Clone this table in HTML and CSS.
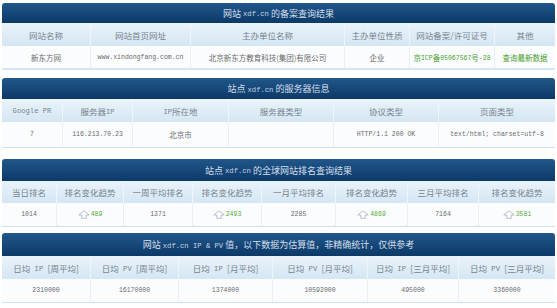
FILE: index.html
```html
<!DOCTYPE html>
<html lang="zh">
<head>
<meta charset="utf-8">
<title>xdf.cn 查询结果</title>
<link rel="stylesheet" href="styles.css">
</head>
<body>
<div class="page">

  <section class="panel p1">
    <div class="title">网站 <span class="m">xdf.cn</span> 的备案查询结果</div>
    <div class="row head">
      <div>网站名称</div>
      <div>网站首页网址</div>
      <div>主办单位名称</div>
      <div>主办单位性质</div>
      <div>网站备案/许可证号</div>
      <div>其他</div>
    </div>
    <div class="row data">
      <div>新东方网</div>
      <div class="m">www.xindongfang.com.cn</div>
      <div>北京新东方教育科技(集团)有限公司</div>
      <div>企业</div>
      <div class="green">京<span class="m">ICP</span>备<span class="m">05067567</span>号<span class="m">-28</span></div>
      <div class="green">查询最新数据</div>
    </div>
  </section>

  <section class="panel p2">
    <div class="title">站点 <span class="m">xdf.cn</span> 的服务器信息</div>
    <div class="row head">
      <div class="m">Google PR</div>
      <div>服务器<span class="m">IP</span></div>
      <div><span class="m">IP</span>所在地</div>
      <div>服务器类型</div>
      <div>协议类型</div>
      <div>页面类型</div>
    </div>
    <div class="row data">
      <div class="m">7</div>
      <div class="m">116.213.70.23</div>
      <div>北京市</div>
      <div></div>
      <div class="m">HTTP/1.1 200 OK</div>
      <div class="m">text/html; charset=utf-8</div>
    </div>
  </section>

  <section class="panel p3">
    <div class="title">站点 <span class="m">xdf.cn</span> 的全球网站排名查询结果</div>
    <div class="row head">
      <div>当日排名</div>
      <div>排名变化趋势</div>
      <div>一周平均排名</div>
      <div>排名变化趋势</div>
      <div>一月平均排名</div>
      <div>排名变化趋势</div>
      <div>三月平均排名</div>
      <div>排名变化趋势</div>
    </div>
    <div class="row data">
      <div class="m">1014</div>
      <div class="trend"><svg class="up" viewBox="0 0 12 9" width="12" height="9"><polygon points="6,0.8 11.2,5 8.2,5 8.2,8.3 3.8,8.3 3.8,5 0.8,5"/></svg><span class="num">489</span></div>
      <div class="m">1371</div>
      <div class="trend"><svg class="up" viewBox="0 0 12 9" width="12" height="9"><polygon points="6,0.8 11.2,5 8.2,5 8.2,8.3 3.8,8.3 3.8,5 0.8,5"/></svg><span class="num">2493</span></div>
      <div class="m">2285</div>
      <div class="trend"><svg class="up" viewBox="0 0 12 9" width="12" height="9"><polygon points="6,0.8 11.2,5 8.2,5 8.2,8.3 3.8,8.3 3.8,5 0.8,5"/></svg><span class="num">4869</span></div>
      <div class="m">7164</div>
      <div class="trend"><svg class="up" viewBox="0 0 12 9" width="12" height="9"><polygon points="6,0.8 11.2,5 8.2,5 8.2,8.3 3.8,8.3 3.8,5 0.8,5"/></svg><span class="num">3581</span></div>
    </div>
  </section>

  <section class="panel p4">
    <div class="title">网站 <span class="m">xdf.cn IP &amp; PV</span> 值，以下数据为估算值，非精确统计，仅供参考</div>
    <div class="row head">
      <div>日均<span class="m"> IP </span>[周平均]</div>
      <div>日均<span class="m"> PV </span>[周平均]</div>
      <div>日均<span class="m"> IP </span>[月平均]</div>
      <div>日均<span class="m"> PV </span>[月平均]</div>
      <div>日均<span class="m"> IP </span>[三月平均]</div>
      <div>日均<span class="m"> PV </span>[三月平均]</div>
    </div>
    <div class="row data">
      <div class="m">2310000</div>
      <div class="m">16170000</div>
      <div class="m">1374000</div>
      <div class="m">10592000</div>
      <div class="m">495000</div>
      <div class="m">3360000</div>
    </div>
  </section>

</div>
</body>
</html>
```

FILE: styles.css
```css
html, body {
  margin: 0;
  padding: 0;
  background: #ffffff;
}

body {
  font-family: "Noto Sans CJK SC", "Noto Sans", sans-serif;
}

.page {
  width: 553px;
  margin: 3px 0 0 2px;
}

.panel {
  margin-bottom: 7px;
}

.title {
  height: 20px;
  display: flex;
  align-items: center;
  justify-content: center;
  background: linear-gradient(#21578b, #0c3967);
  color: #d3dfeb;
  font-size: 9px;
  border-radius: 3px 3px 0 0;
  white-space: pre;
}

.title .m {
  font-size: 7.2px;
  color: #c6d4e2;
}

.row {
  display: grid;
}

.row > div {
  display: flex;
  align-items: center;
  justify-content: center;
  white-space: pre;
  overflow: hidden;
}

.head {
  height: 23px;
  background: linear-gradient(#eaf3fa, #d4e6f3);
  color: #76848f;
  font-size: 8.5px;
}

.head > div + div {
  border-left: 1px solid #eef5fb;
}

.head .m {
  font-size: 7.2px;
}

.data {
  height: 22px;
  background: #fbfcfe;
  color: #6b6b6b;
  font-size: 7.5px;
  border-bottom: 1px solid #cfe1ef;
}

.data > div + div {
  border-left: 1px solid #e8eff5;
}

.m {
  font-family: "Liberation Mono", "DejaVu Sans Mono", monospace;
  font-size: 6.5px;
}

span.m {
  position: relative;
  top: 1.2px;
}

.green {
  color: #48a02a;
}

.trend .up {
  fill: #ffffff;
  stroke: #a9b7c4;
  stroke-width: 0.9;
  margin-right: 1px;
}

.num {
  font-family: "Liberation Mono", "DejaVu Sans Mono", monospace;
  font-size: 6.5px;
  color: #55ad36;
}

/* panel 1: 备案 */
.p1 .title { height: 20px; }
.p1 .row { grid-template-columns: 88px 100px 154px 65px 85px 61px; }
.p1 .data { height: 22px; border-bottom: 2px solid #d6e6f2; }
.p1 { margin-bottom: 8px; }

/* panel 2: 服务器 */
.p2 .title { height: 21px; }
.p2 .row { grid-template-columns: 60px 70px 96px 105px 105px 117px; }
.p2 .data { height: 25px; }
.p2 { margin-bottom: 11px; }

/* panel 3: 排名 */
.p3 .title { height: 22px; }
.p3 .head { height: 22px; }
.p3 .row { grid-template-columns: 54px 67px 69px 69px 74px 72px 71px 77px; }
.p3 .data { height: 23px; }
.p3 { margin-bottom: 6px; }

/* panel 4: IP & PV */
.p4 .title { height: 23px; }
.p4 .row { grid-template-columns: 88px 88px 94px 95px 91px 97px; }
.p4 .data { height: 23px; }
```
